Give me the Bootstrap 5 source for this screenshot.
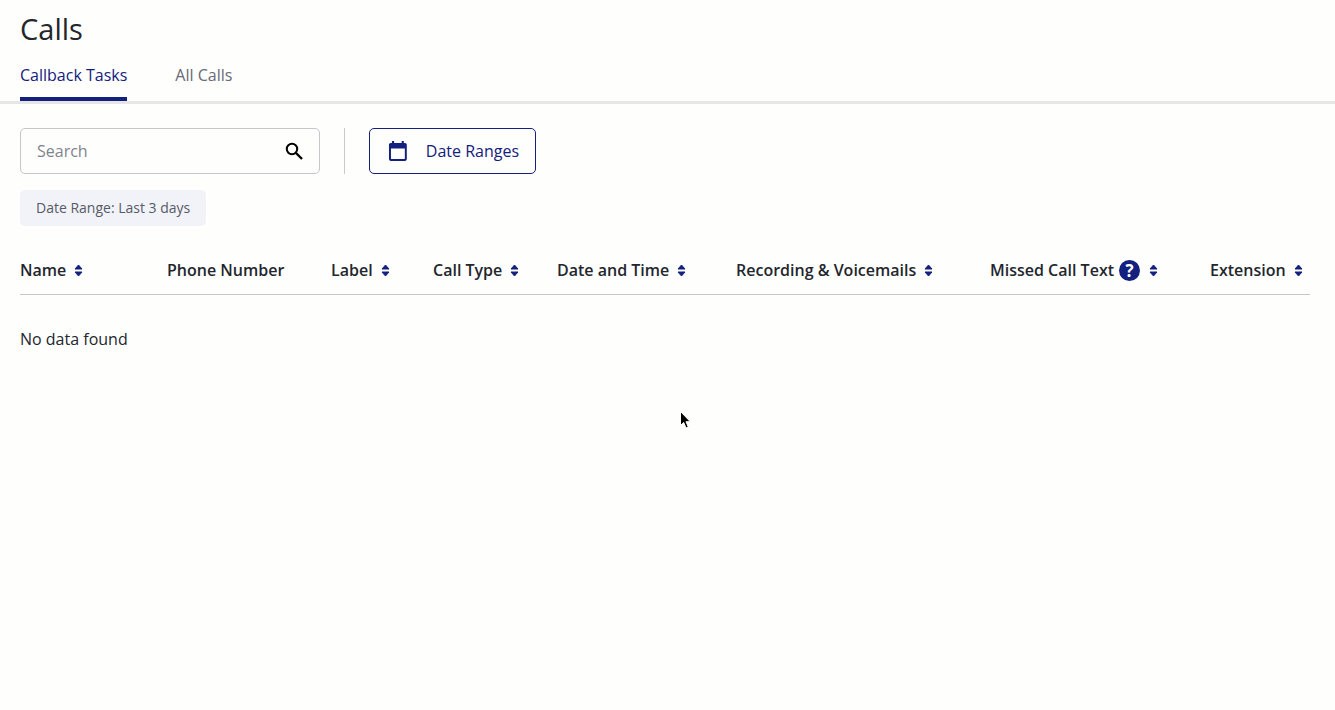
<!DOCTYPE html>
<html lang="en">
<head>
<meta charset="utf-8">
<title>Calls</title>
<link rel="stylesheet" href="https://cdn.jsdelivr.net/npm/bootstrap@5.3.0/dist/css/bootstrap.min.css">
<style>
html,body{height:100%}
body{background:#fefefd;font-family:"Open Sans",sans-serif;color:#23262d;font-size:16px;overflow:hidden}
.page-title{font-size:29px;line-height:40px;font-weight:400;margin:0;padding:9px 20px 0;color:#23262d}
.tabs{border-bottom:3px solid #e6e6e6;padding:0 20px;gap:48px;height:55px}
.tabs .nav-link{padding:0;height:52px;line-height:52px;color:#666a75;font-size:16px;border-bottom:4px solid transparent;background:none}
.tabs .nav-link.active{color:#14207e;border-bottom-color:#14207e}
.toolbar{padding:24px 20px 0}
.search{width:300px;height:46px;border:1px solid #c4c6cb;border-radius:5px;padding:0 15px 0 16px}
.search input{border:0;outline:0;background:transparent;flex:1;min-width:0;font-size:16px;color:#23262d;padding:0}
.search input::placeholder{color:#80848d;opacity:1}
.vsep{width:1px;height:46px;background:#c9cacd;margin:0 24px}
.date-btn{height:46px;width:167px;border:1.25px solid #14207e;border-radius:5px;color:#14207e;font-size:16px;padding:0 16px 0 17px;gap:17px;background:transparent;white-space:nowrap;--bs-btn-hover-color:#14207e;--bs-btn-hover-bg:transparent;--bs-btn-hover-border-color:#14207e}
.chip{display:inline-block;margin:16px 20px 0;background:#f2f3f9;border-radius:5px;color:#565b66;font-size:14px;line-height:19px;padding:8px 16px;height:36px}
.table-wrap{padding:0 20px}
.data-table{table-layout:fixed;width:1290px;margin:18px 0 0;--bs-table-bg:transparent;--bs-table-color:#23262d}
.data-table th{font-weight:600;font-size:16px;line-height:22px;padding:15px 0 13px;border-bottom:1px solid #c6c7cb;white-space:nowrap;color:#23262d}
.data-table td{border:0;padding:33px 0 0;font-size:16px;line-height:22px;color:#23262d}
.c1{width:147px}.c2{width:164px}.c3{width:102px}.c4{width:124px}.c5{width:179px}.c6{width:254px}.c7{width:220px}.c8{width:100px}
.sort{width:9px;height:13px;margin-left:8px;vertical-align:-1px}
.help{width:21px;height:21px;margin-left:5px;margin-right:1px;vertical-align:-5px}
.cursor{position:absolute;left:679px;top:410px;width:12px;height:20px}
</style>
</head>
<body>
<h1 class="page-title">Calls</h1>
<ul class="nav tabs">
  <li class="nav-item"><a class="nav-link active" href="#">Callback Tasks</a></li>
  <li class="nav-item"><a class="nav-link" href="#">All Calls</a></li>
</ul>
<div class="toolbar d-flex align-items-center">
  <div class="search d-flex align-items-center">
    <input type="text" placeholder="Search" aria-label="Search">
    <svg width="20" height="20" viewBox="0 0 20 20" fill="none" stroke="#000" stroke-width="2"><circle cx="8" cy="8" r="5.2"/><path d="M12 12l6 6" stroke-width="2.4"/></svg>
  </div>
  <div class="vsep"></div>
  <button type="button" class="btn date-btn d-flex align-items-center">
    <svg width="22" height="22" viewBox="0 0 22 22" fill="#14207e"><path d="M5 1h2.200v2h7.600V1H17v2h1.200C19.200 3 20 3.800 20 4.800v14.400c0 1-.8 1.800-1.800 1.800H3.800C2.800 21 2 20.200 2 19.200V4.800C2 3.800 2.800 3 3.800 3H5zM4 8.500v10.500h14V8.500z"/></svg>
    <span>Date Ranges</span>
  </button>
</div>
<div class="chip">Date Range: Last 3 days</div>
<div class="table-wrap">
  <table class="table data-table">
    <colgroup><col class="c1"><col class="c2"><col class="c3"><col class="c4"><col class="c5"><col class="c6"><col class="c7"><col class="c8"></colgroup>
    <thead>
      <tr>
        <th>Name<svg class="sort" viewBox="0 0 9 13" fill="#14207e" stroke="#14207e" stroke-linejoin="round"><path d="M4.500 1l3.500 4H1zM4.500 12L1 8h7z"/></svg></th>
        <th>Phone Number</th>
        <th>Label<svg class="sort" viewBox="0 0 9 13" fill="#14207e" stroke="#14207e" stroke-linejoin="round"><path d="M4.500 1l3.500 4H1zM4.500 12L1 8h7z"/></svg></th>
        <th>Call Type<svg class="sort" viewBox="0 0 9 13" fill="#14207e" stroke="#14207e" stroke-linejoin="round"><path d="M4.500 1l3.500 4H1zM4.500 12L1 8h7z"/></svg></th>
        <th>Date and Time<svg class="sort" viewBox="0 0 9 13" fill="#14207e" stroke="#14207e" stroke-linejoin="round"><path d="M4.500 1l3.500 4H1zM4.500 12L1 8h7z"/></svg></th>
        <th>Recording &amp; Voicemails<svg class="sort" viewBox="0 0 9 13" fill="#14207e" stroke="#14207e" stroke-linejoin="round"><path d="M4.500 1l3.500 4H1zM4.500 12L1 8h7z"/></svg></th>
        <th>Missed Call Text<svg class="help" viewBox="0 0 21 21"><circle cx="10.500" cy="10.500" r="10.500" fill="#14207e"/><text x="10.500" y="16.500" text-anchor="middle" font-family="Open Sans" font-weight="700" font-size="17" fill="#fff">?</text></svg><svg class="sort" viewBox="0 0 9 13" fill="#14207e" stroke="#14207e" stroke-linejoin="round"><path d="M4.500 1l3.500 4H1zM4.500 12L1 8h7z"/></svg></th>
        <th>Extension<svg class="sort" viewBox="0 0 9 13" fill="#14207e" stroke="#14207e" stroke-linejoin="round"><path d="M4.500 1l3.500 4H1zM4.500 12L1 8h7z"/></svg></th>
      </tr>
    </thead>
    <tbody><tr><td colspan="8">No data found</td></tr></tbody>
  </table>
</div>
<svg class="cursor" viewBox="0 0 12 20"><path d="M1.500 1.500v14l3.200-3 2.300 5.500 2.300-1-2.300-5.300h4.300z" fill="#000" stroke="#fff" stroke-width="1"/></svg>
<script src="https://cdn.jsdelivr.net/npm/bootstrap@5.3.0/dist/js/bootstrap.bundle.min.js"></script>
</body>
</html>
